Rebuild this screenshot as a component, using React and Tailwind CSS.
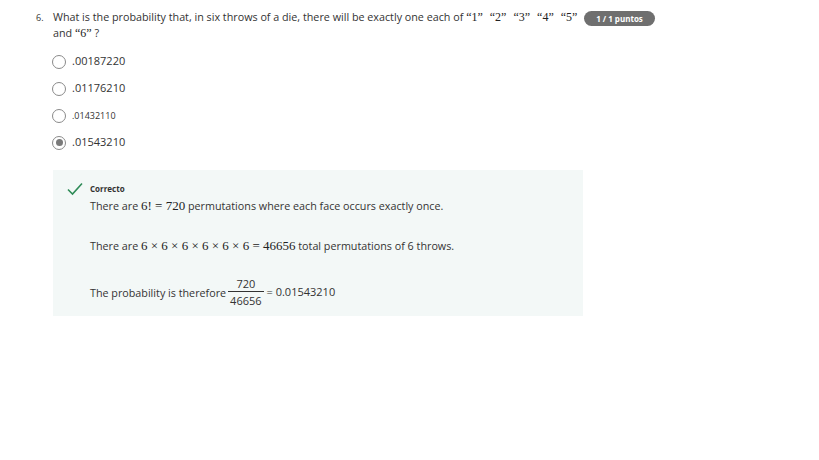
import React from "react";

const sans = { fontFamily: '"Open Sans", "Noto Sans", sans-serif' };
const serif = { fontFamily: '"Liberation Serif", "DejaVu Serif", serif' };

function Radio({ checked }) {
  return (
    <span className="w-[14px] h-[14px] rounded-full border border-[#8a8a8a] flex items-center justify-center bg-white shrink-0">
      {checked && <span className="w-[7px] h-[7px] rounded-full bg-[#7a7a7a]" />}
    </span>
  );
}

function M({ children }) {
  return <span className="text-[13px] leading-[13px] text-[#222]" style={serif}>{children}</span>;
}

function Q({ n, last }) {
  return (
    <span className={`inline-block ${last ? "" : "mr-[7px]"} text-[12px] leading-[12px] text-[#222]`} style={serif}>
      “{n}”
    </span>
  );
}

export default function App() {
  const opts = [
    { t: ".00187220", s: "text-[11px]" },
    { t: ".01176210", s: "text-[11px]" },
    { t: ".01432110", s: "text-[9px]" },
    { t: ".01543210", s: "text-[11px]", c: true },
  ];
  return (
    <div className="w-[819px] h-[460px] bg-white text-[#333]" style={sans}>
      <div className="flex pt-[9px] pl-[36px]">
        <div className="w-[17px] text-[9px] leading-[16px] pt-[1px]">6.</div>
        <div className="w-[531px] text-[10.75px] leading-[16px]">
          What is the probability that, in six throws of a die, there will be exactly one each of{" "}
          <span className="whitespace-nowrap">
            <Q n="1" />
            <Q n="2" />
            <Q n="3" />
            <Q n="4" />
            <Q n="5" last />
          </span>{" "}
          and <Q n="6" last /> ?
        </div>
        <div className="mt-[2px] h-[15px] w-[71px] rounded-full bg-[#6f6f6f] text-white text-[8px] font-bold flex items-center justify-center">
          1 / 1 puntos
        </div>
      </div>

      <div className="pl-[52px] pt-[7px] flex flex-col">
        {opts.map((o, i) => (
          <div key={i} className="flex items-center gap-[6px] h-[27px]">
            <Radio checked={o.c} />
            <span className={`${o.s} text-[#333]`}>{o.t}</span>
          </div>
        ))}
      </div>

      <div className="ml-[53px] mt-[14px] w-[530px] h-[146px] bg-[#f3f8f7] pl-[14px] pt-[12px]">
        <div className="flex gap-[7px]">
          <svg width="16" height="14" viewBox="0 0 16 14" className="shrink-0">
            <path d="M1 7.5 L5.5 12 L15 1.5" fill="none" stroke="#2e8b57" strokeWidth="1.6" />
          </svg>
          <div>
            <div className="text-[8px] font-bold text-[#333] leading-[12px] pt-[1px]">Correcto</div>
            <div className="text-[10.75px] leading-[16px] mt-[3px] text-[#333]">
              There are <M>6! = 720</M> permutations where each face occurs exactly once.
            </div>
            <div className="text-[10.75px] leading-[16px] mt-[24px] text-[#333]">
              There are <M>6 × 6 × 6 × 6 × 6 × 6 = 46656</M> total permutations of 6 throws.
            </div>
            <div className="flex items-center mt-[22px] text-[10.75px] text-[#333]">
              <span className="mt-[2px]">The probability is therefore</span>
              <span className="inline-flex flex-col items-center mx-[2px] text-[11px]">
                <span className="leading-[15px] px-[2px]">720</span>
                <span className="h-[1px] w-full bg-[#333]" />
                <span className="leading-[17px] px-[2px]">46656</span>
              </span>
              <span className="ml-[1px] text-[11px]">= 0.01543210</span>
            </div>
          </div>
        </div>
      </div>
    </div>
  );
}
